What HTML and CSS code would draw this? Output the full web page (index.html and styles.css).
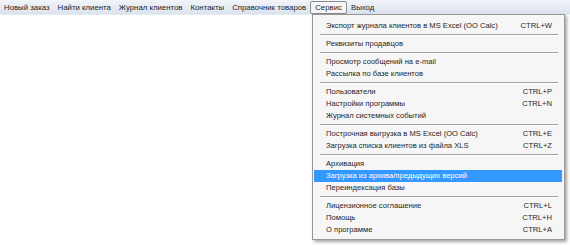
FILE: index.html
```html
<!DOCTYPE html>
<html lang="ru">
<head>
    <meta charset="UTF-8">
    <title>Сервис</title>
    <link rel="stylesheet" href="styles.css">
</head>
<body>
    <div class="menubar">
        <div class="menu-item">Новый заказ</div>
        <div class="menu-item">Найти клиента</div>
        <div class="menu-item">Журнал клиентов</div>
        <div class="menu-item">Контакты</div>
        <div class="menu-item">Справочник товаров</div>
        <div class="menu-item open">Сервис</div>
        <div class="menu-item">Выход</div>
    </div>

    <div class="dropdown">
        <div class="row"><span>Экспорт журнала клиентов в MS Excel (OO Calc)</span><span>CTRL+W</span></div>
        <div class="sep"></div>
        <div class="row"><span>Реквизиты продавцов</span></div>
        <div class="sep"></div>
        <div class="row"><span>Просмотр сообщений на e-mail</span></div>
        <div class="row"><span>Рассылка по базе клиентов</span></div>
        <div class="sep"></div>
        <div class="row"><span>Пользователи</span><span>CTRL+P</span></div>
        <div class="row"><span>Настройки программы</span><span>CTRL+N</span></div>
        <div class="row"><span>Журнал системных событий</span></div>
        <div class="sep"></div>
        <div class="row"><span>Построчная выгрузка в MS Excel (OO Calc)</span><span>CTRL+E</span></div>
        <div class="row"><span>Загрузка списка клиентов из файла XLS</span><span>CTRL+Z</span></div>
        <div class="sep"></div>
        <div class="row"><span>Архивация</span></div>
        <div class="row active"><span>Загрузка из архива/предыдущих версий</span></div>
        <div class="row"><span>Переиндексация базы</span></div>
        <div class="sep"></div>
        <div class="row"><span>Лицензионное соглашение</span><span>CTRL+L</span></div>
        <div class="row"><span>Помощь</span><span>CTRL+H</span></div>
        <div class="row"><span>О программе</span><span>CTRL+A</span></div>
    </div>
</body>
</html>
```
FILE: styles.css
```css
body {
    margin: 0;
    background: #ffffff;
    font-family: "Liberation Sans", Arial, sans-serif;
    font-size: 7.6px;
    color: #1e1e1e;
}

.menubar {
    display: flex;
    align-items: center;
    height: 14px;
    background: linear-gradient(to bottom, #f2f5fa, #dbe3ee);
    border-bottom: 1px solid #e6ebf2;
    font-size: 7.8px;
}
.menu-item {
    padding: 0 3px;
    line-height: 11px;
    border: 1px solid transparent;
}
.menu-item.open {
    padding: 0 4px;
    border-color: #8a8a8a;
    border-radius: 2px;
    background: #f4f6f9;
}

/* dropdown lies over the page */
.dropdown {
    position: absolute;
    top: 14px;
    left: 312px;
    width: 248px;
    padding: 5px 2px 3px 1px;
    background: #f6f6f6;
    border: 1px solid #979797;
    box-shadow: 2px 2px 3px rgba(0, 0, 0, 0.35);
}
.row {
    display: flex;
    justify-content: space-between;
    height: 12px;
    line-height: 12px;
    padding: 0 10px 0 12px;
    white-space: nowrap;
}
.row.active {
    background: #3399ff;
    color: #ffffff;
}
.sep {
    height: 1px;
    margin: 2px 4px 2px 6px;
    background: #a0a0a0;
    border-bottom: 1px solid #ffffff;
}
```
